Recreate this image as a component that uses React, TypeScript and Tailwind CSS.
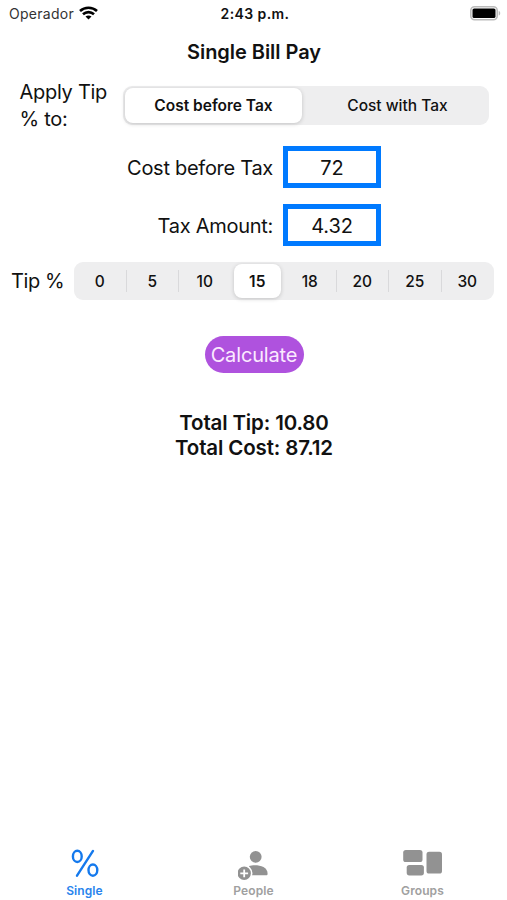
import React, { useState } from 'react';
import clsx from 'clsx';

const tipOptions = ['0', '5', '10', '15', '18', '20', '25', '30'];

const WifiIcon = () => (
  <svg width="19" height="14" viewBox="0 0 19 14" fill="none" stroke="#000" strokeWidth="2.6">
    <path d="M1 5C5.7 0.6 13.3 0.6 18 5" />
    <path d="M4 8.3C7.1 5.4 11.9 5.4 15 8.3" />
    <path d="M9.5 13.6L6.5 10.6C8.2 9.1 10.8 9.1 12.5 10.6Z" fill="#000" stroke="none" />
  </svg>
);

const BatteryIcon = () => (
  <svg width="31" height="15" viewBox="0 0 31 15">
    <rect x="0.8" y="0.8" width="26.4" height="12.9" rx="3.8" fill="#fff" stroke="#bbb" strokeWidth="1.6" />
    <rect x="2.5" y="2.5" width="23" height="9.5" rx="1.6" fill="#000" />
    <path d="M28.7 5C30.7 5.4 30.7 9 28.7 9.5Z" fill="#bbb" />
  </svg>
);

const StatusBar = () => (
  <div className="grid h-[26px] grid-cols-3 items-center pl-[9px] pr-[6px] text-[14px]">
    <div className="flex items-center gap-[5px]">
      <span className="tracking-[0.27px] text-[#333]">Operador</span>
      <WifiIcon />
    </div>
    <span className="text-center font-semibold tracking-[0.4px]">2:43 p.m.</span>
    <div className="flex justify-end">
      <BatteryIcon />
    </div>
  </div>
);

interface AmountFieldProps {
  label: string;
  value: string;
  onChange: (value: string) => void;
}

const AmountField: React.FC<AmountFieldProps> = ({ label, value, onChange }) => (
  <label className="flex h-[42px] items-center">
    <span className="w-[273px] pt-px text-right text-[20px] tracking-[-0.28px]">{label}</span>
    <input
      value={value}
      onChange={(e) => onChange(e.target.value)}
      className="ml-[10px] h-[42px] w-[98px] border-[5px] border-[#007aff] pt-0.5 text-center text-[20px] tracking-[-0.1px] outline-none"
    />
  </label>
);

const PercentIcon = () => (
  <svg width="28" height="30" viewBox="0 0 28 30" fill="none" stroke="#1479ed" strokeWidth="2.4">
    <ellipse cx="6.3" cy="8.4" rx="4.4" ry="5.6" />
    <ellipse cx="21.9" cy="22.1" rx="4.4" ry="5.6" />
    <path d="M22 2.9L6 27.7" strokeLinecap="round" />
  </svg>
);

const PeopleIcon = () => (
  <svg width="32" height="32" viewBox="0 0 32 32" fill="#929292">
    <circle cx="17.7" cy="8.8" r="5.9" />
    <path d="M11 18.1C17 16.3 29.6 17.2 29.6 25.7C29.6 26.8 29 27.3 28.1 27.3H13.7Z" />
    <circle cx="6.2" cy="25.3" r="7.5" stroke="#fff" strokeWidth="1.6" />
    <path d="M6.2 21.4V29.2M2.3 25.3H10.1" stroke="#fff" strokeWidth="1.8" />
  </svg>
);

const GroupsIcon = () => (
  <svg width="40" height="29" viewBox="0 0 40 29" fill="#929292">
    <rect x="0.2" y="2" width="19.3" height="12" rx="2.6" />
    <rect x="3.7" y="17" width="17.2" height="10.4" rx="2.6" />
    <rect x="23.5" y="3.8" width="15.5" height="21.8" rx="2.6" />
  </svg>
);

const tabs = [
  { name: 'Single', icon: <PercentIcon /> },
  { name: 'People', icon: <PeopleIcon /> },
  { name: 'Groups', icon: <GroupsIcon /> },
];

export default function App() {
  const [basis, setBasis] = useState('Cost before Tax');
  const [cost, setCost] = useState('72');
  const [tax, setTax] = useState('4.32');
  const [tip, setTip] = useState('15');

  return (
    <div className="flex h-[900px] w-[507px] flex-col bg-white font-['Inter',sans-serif] text-[#111]">
      <StatusBar />

      <h1 className="mt-[12px] pl-px text-center text-[20px] leading-[28px] font-semibold tracking-[-0.04px]">
        Single Bill Pay
      </h1>

      <div className="mt-[13px] flex h-[53px] items-center">
        <span className="ml-[19.5px] w-[103.5px] text-[20px] leading-[27px] tracking-[-0.28px]">
          Apply Tip
          <br />% to:
        </span>
        <div className="flex h-[39px] w-[366px] rounded-[9px] bg-[#eeeeef] p-[2px]">
          {['Cost before Tax', 'Cost with Tax'].map((option) => (
            <button
              key={option}
              onClick={() => setBasis(option)}
              className={clsx(
                'rounded-[8px] pt-px text-[15.5px]',
                basis === option
                  ? 'w-[177px] bg-white font-semibold shadow-[0_1px_4px_rgba(0,0,0,0.18)]'
                  : 'flex-1 pl-1.5 font-medium'
              )}
            >
              {option}
            </button>
          ))}
        </div>
      </div>

      <div className="mt-[14px] flex flex-col gap-4">
        <AmountField label="Cost before Tax" value={cost} onChange={setCost} />
        <AmountField label="Tax Amount:" value={tax} onChange={setTax} />
      </div>

      <div className="mt-[16px] flex h-[38px] items-center">
        <span className="ml-[11px] w-[63px] text-[20px] tracking-[-0.4px]">Tip %</span>
        <div className="flex h-[38px] w-[420px] items-center rounded-[9px] bg-[#eeeeef]">
          {tipOptions.map((option, i) => {
            const next = tipOptions[i + 1];
            const divider = next && option !== tip && next !== tip;
            return (
              <div
                key={option}
                className={clsx(
                  'flex h-[22px] flex-1 items-center justify-center border-r',
                  divider ? 'border-[#d9d9db]' : 'border-transparent'
                )}
              >
                <button
                  onClick={() => setTip(option)}
                  className={clsx(
                    'h-[34px] w-[47px] shrink-0 rounded-[8px] pt-px text-[15.5px]',
                    tip === option
                      ? 'bg-white font-semibold shadow-[0_1px_4px_rgba(0,0,0,0.18)]'
                      : 'font-medium'
                  )}
                >
                  {option}
                </button>
              </div>
            );
          })}
        </div>
      </div>

      <button className="mt-[36px] ml-[204.5px] h-[37px] w-[99px] rounded-full bg-[#af52de] pt-px text-[20px] tracking-[-0.15px] text-[#fbeaff]">
        Calculate
      </button>

      <div className="mt-[37px] pl-px text-center text-[20.5px] leading-[25px] font-semibold tracking-[-0.14px]">
        <p>Total Tip: 10.80</p>
        <p>Total Cost: 87.12</p>
      </div>

      <nav className="mt-auto grid h-[52px] grid-cols-3">
        {tabs.map((tab, i) => (
          <button
            key={tab.name}
            className={clsx(
              'flex flex-col items-center text-[12px] leading-[16px] font-semibold tracking-[0.1px]',
              i === 0 ? 'text-[#2884ed]' : 'text-[#a0a0a0]'
            )}
          >
            <span className="flex h-[35px] items-start">{tab.icon}</span>
            {tab.name}
          </button>
        ))}
      </nav>
    </div>
  );
}
